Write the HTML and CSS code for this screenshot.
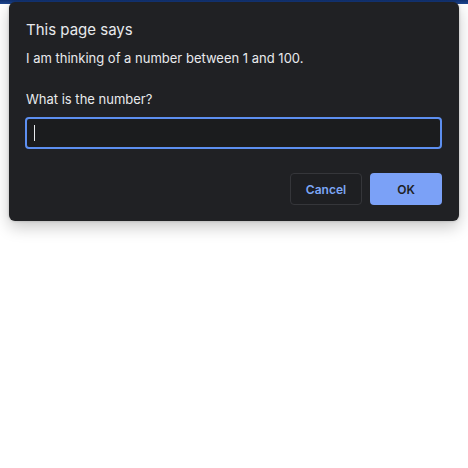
FILE: index.html
```html
<!DOCTYPE html>
<html>
<head>
<meta charset="utf-8">
<link rel="stylesheet" href="styles.css">
</head>
<body>
<div class="topbar"></div>
<div class="dialog">
  <div class="title">This page says</div>
  <div class="message">I am thinking of a number between 1 and 100.</div>
  <div class="prompt">What is the number?</div>
  <div class="field"><span class="caret"></span></div>
  <div class="actions">
    <div class="btn cancel">Cancel</div>
    <div class="btn ok">OK</div>
  </div>
</div>
</body>
</html>
```
FILE: styles.css
```css
html, body {
  margin: 0;
  padding: 0;
  background: #ffffff;
  width: 468px;
  height: 468px;
  overflow: hidden;
  font-family: "Inter", "Noto Sans", sans-serif;
}
.topbar {
  height: 4px;
  background: linear-gradient(#10306e, #1d4690);
}
.dialog {
  position: absolute;
  top: 2px;
  left: 9px;
  width: 450px;
  height: 219px;
  box-sizing: border-box;
  padding: 18px 17px 16px 16px;
  background: #202124;
  border-radius: 6px;
  box-shadow: 0 6px 16px rgba(0, 0, 0, 0.22), 0 0 3px rgba(0, 0, 0, 0.2);
  color: #e8eaed;
  display: flex;
  flex-direction: column;
}
.title {
  font-size: 15px;
  line-height: 20px;
  padding-left: 1px;
}
.message {
  font-size: 13px;
  line-height: 18px;
  margin-top: 9px;
  padding-left: 1px;
}
.prompt {
  font-size: 13px;
  line-height: 18px;
  margin-top: 23px;
  padding-left: 1px;
}
.field {
  margin-top: 9px;
  height: 32px;
  box-sizing: border-box;
  border: 2px solid #5d8ff0;
  border-radius: 4px;
  background: #1b1c1e;
  display: flex;
  align-items: center;
  padding-left: 7px;
}
.caret {
  width: 1px;
  height: 16px;
  background: #e8eaed;
}
.actions {
  margin-top: 24px;
  display: flex;
  justify-content: flex-end;
  gap: 8px;
}
.btn {
  width: 72px;
  height: 32px;
  box-sizing: border-box;
  border-radius: 4px;
  display: flex;
  align-items: center;
  justify-content: center;
  font-size: 12px;
  font-weight: 600;
}
.cancel {
  border: 1px solid #35363a;
  color: #7ca6f5;
  background: #1e1f22;
}
.ok {
  background: #7ba1f7;
  color: #202124;
}
```
